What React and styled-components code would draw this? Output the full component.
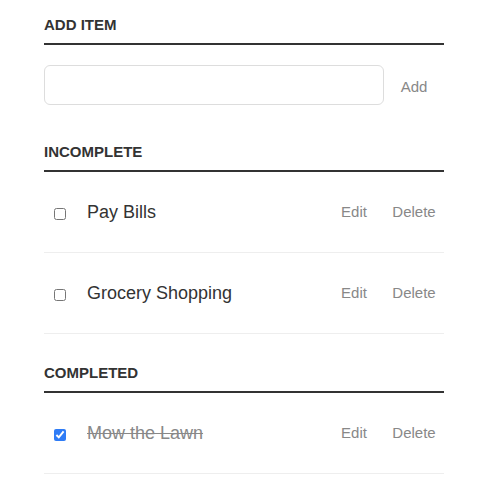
import styled, { createGlobalStyle } from "styled-components";

const GlobalStyle = createGlobalStyle`
  body {
    margin: 0;
    background: #fff;
    font-family: "Liberation Sans", Arial, Helvetica, sans-serif;
    color: #333;
  }
`;

const incomplete = [
  { id: 1, label: "Pay Bills" },
  { id: 2, label: "Grocery Shopping" },
];

const completed = [{ id: 3, label: "Mow the Lawn" }];

export default function App() {
  return (
    <>
      <GlobalStyle />
      <Container>
        <Heading $top={16}>Add item</Heading>
        <AddRow>
          <NewTask type="text" />
          <Button $shift={3}>Add</Button>
        </AddRow>
        <Heading $top={29}>Incomplete</Heading>
        <TaskList>
          {incomplete.map((t) => (
            <Task key={t.id}>
              <CheckCell>
                <Check type="checkbox" />
              </CheckCell>
              <Label>{t.label}</Label>
              <Button>Edit</Button>
              <Button>Delete</Button>
            </Task>
          ))}
        </TaskList>
        <Heading $top={30}>Completed</Heading>
        <TaskList>
          {completed.map((t) => (
            <Task key={t.id}>
              <CheckCell>
                <Check type="checkbox" defaultChecked />
              </CheckCell>
              <Label $done>{t.label}</Label>
              <Button>Edit</Button>
              <Button>Delete</Button>
            </Task>
          ))}
        </TaskList>
      </Container>
    </>
  );
}

const Container = styled.div`
  width: 400px;
  margin: 0 0 0 44px;
`;

const Heading = styled.h3`
  margin: 0;
  padding: ${(p) => p.$top}px 0 10px;
  font-size: 15px;
  line-height: 17px;
  font-weight: 700;
  text-transform: uppercase;
  color: #333;
  border-bottom: 2px solid #333;
`;

const AddRow = styled.div`
  display: flex;
  align-items: center;
  padding: 20px 0 9px;
`;

const NewTask = styled.input`
  box-sizing: border-box;
  width: 340px;
  height: 40px;
  margin: 0;
  padding: 10px;
  font-size: 18px;
  border: 1px solid #ddd;
  border-radius: 6px;
  outline: none;
  color: #888;
  font-family: inherit;
`;

const Button = styled.button`
  width: 60px;
  height: 40px;
  padding: ${(p) => p.$shift || 0}px 0 0;
  background: none;
  border: 0;
  color: #888;
  font-size: 15px;
  font-family: inherit;
  line-height: ${(p) => 40 - (p.$shift || 0)}px;
  cursor: pointer;
  text-align: center;
`;

const TaskList = styled.ul`
  margin: 0;
  padding: 0;
  list-style: none;
`;

const Task = styled.li`
  display: flex;
  align-items: center;
  padding: 20px 0;
  border-bottom: 1px solid #eee;
`;

const CheckCell = styled.div`
  width: 32px;
  height: 40px;
  display: flex;
  align-items: center;
  justify-content: center;
  padding-top: 4px;
  box-sizing: border-box;
`;

const Check = styled.input`
  width: 12px;
  height: 12px;
  margin: 0;
  accent-color: #2f7cf6;
`;

const Label = styled.label`
  width: 237px;
  padding-left: 11px;
  font-size: 18px;
  line-height: 40px;
  color: ${(p) => (p.$done ? "#888" : "#333")};
  text-decoration: ${(p) => (p.$done ? "line-through" : "none")};
`;
